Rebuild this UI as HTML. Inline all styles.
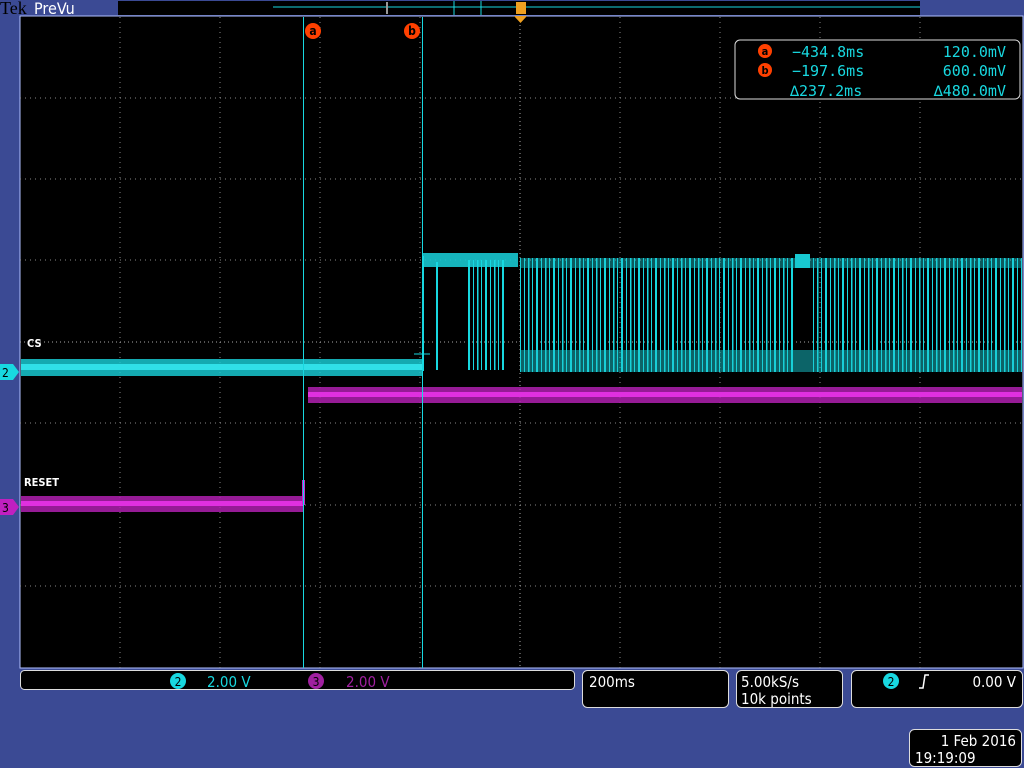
<!DOCTYPE html>
<html><head><style>
html,body{margin:0;padding:0;width:1024px;height:768px;overflow:hidden;background:#3b4a94;font-family:"DejaVu Sans Condensed","Liberation Sans",sans-serif}
svg{position:absolute;left:0;top:0}
.t{font-family:"DejaVu Sans Mono","Liberation Mono",monospace}
</style></head><body>
<svg width="1024" height="768" viewBox="0 0 1024 768">
<defs>
<pattern id="burst" width="17" height="120" patternUnits="userSpaceOnUse">
<rect x="1" y="0" width="1.5" height="120" fill="#18d8e0"/>
<rect x="5" y="0" width="1" height="120" fill="#18d8e0"/>
<rect x="9" y="0" width="2" height="120" fill="#18d8e0"/>
<rect x="14" y="0" width="1" height="120" fill="#18d8e0"/>
</pattern>
</defs>
<text x="0" y="14" font-family="Liberation Serif,serif" font-size="18" fill="#000">Tek</text>
<text x="34" y="14" font-size="16" fill="#fff">PreVu</text>
<rect x="118" y="1" width="802" height="14" fill="#000"/>
<line x1="273" y1="7" x2="920" y2="7" stroke="#18d8e0"/>
<rect x="386" y="2" width="2" height="12" fill="#999"/>
<line x1="454" y1="1" x2="454" y2="15" stroke="#18d8e0"/>
<line x1="481" y1="1" x2="481" y2="15" stroke="#18d8e0"/>
<rect x="516" y="2" width="10" height="12" fill="#f0a020"/>
<rect x="20" y="16" width="1003" height="652" fill="#000" stroke="#b0c0ff" stroke-width="1"/>
<g stroke="#888" stroke-width="1" stroke-dasharray="1,4">
<line x1="120" y1="17" x2="120" y2="668"/><line x1="220" y1="17" x2="220" y2="668"/><line x1="320" y1="17" x2="320" y2="668"/><line x1="420" y1="17" x2="420" y2="668"/><line x1="620" y1="17" x2="620" y2="668"/><line x1="720" y1="17" x2="720" y2="668"/><line x1="820" y1="17" x2="820" y2="668"/><line x1="920" y1="17" x2="920" y2="668"/>
<line x1="20" y1="98" x2="1022" y2="98"/><line x1="20" y1="179" x2="1022" y2="179"/><line x1="20" y1="260" x2="1022" y2="260"/><line x1="20" y1="423" x2="1022" y2="423"/><line x1="20" y1="505" x2="1022" y2="505"/><line x1="20" y1="586" x2="1022" y2="586"/>
</g>
<g stroke="#aaa" stroke-dasharray="1,3"><line x1="520" y1="17" x2="520" y2="668"/><line x1="20" y1="342" x2="1022" y2="342"/></g>
<rect x="21" y="496" width="282" height="16" fill="#b020b0" opacity="0.85"/>
<rect x="21" y="501" width="282" height="5" fill="#e030e0"/>
<rect x="308" y="387" width="714" height="16" fill="#b020b0" opacity="0.85"/>
<rect x="308" y="392" width="714" height="5" fill="#e030e0"/>
<rect x="302" y="480" width="3" height="25" fill="#d020d0"/>
<rect x="21" y="359" width="401" height="17" fill="#18c8d0" opacity="0.85"/>
<rect x="21" y="364" width="401" height="6" fill="#30e0e8"/>
<rect x="422" y="253" width="96" height="14" fill="#18c8d0" opacity="0.9"/>
<rect x="422" y="256" width="2" height="115" fill="#18d8e0"/>
<rect x="436" y="262" width="2" height="108" fill="#18d8e0"/>
<rect x="465" y="260" width="40" height="110" fill="url(#burst)"/>
<rect x="520" y="258" width="275" height="114" fill="url(#burst)"/>
<rect x="795" y="254" width="15" height="14" fill="#18c8d0"/>
<rect x="810" y="258" width="212" height="114" fill="url(#burst)"/>
<rect x="520" y="350" width="502" height="22" fill="#18c8d0" opacity="0.5"/>
<rect x="520" y="258" width="502" height="10" fill="#18c8d0" opacity="0.45"/>
<line x1="414" y1="354" x2="430" y2="354" stroke="#18d8e0"/>
<line x1="303.5" y1="17" x2="303.5" y2="668" stroke="#18d8e0"/>
<line x1="422.5" y1="17" x2="422.5" y2="668" stroke="#18d8e0"/>
<circle cx="313" cy="31" r="8" fill="#ff4000"/><text x="313" y="35" font-size="12" fill="#000" text-anchor="middle" font-weight="bold">a</text>
<circle cx="412" cy="31" r="8" fill="#ff4000"/><text x="412" y="35" font-size="12" fill="#000" text-anchor="middle" font-weight="bold">b</text>
<path d="M514 16 L527 16 L520.5 23 Z" fill="#f0a020"/>
<text x="27" y="347" font-size="11" font-weight="bold" fill="#fff">CS</text>
<text x="24" y="486" font-size="11" font-weight="bold" fill="#fff">RESET</text>
<path d="M0 364 L13 364 L19 372 L13 380 L0 380 Z" fill="#18d8e0"/><text x="2" y="377" font-size="12" fill="#000">2</text>
<path d="M0 499 L13 499 L19 507 L13 515 L0 515 Z" fill="#c020c0"/><text x="2" y="512" font-size="12" fill="#000">3</text>
<rect x="735" y="40" width="285" height="59" rx="5" fill="#000" stroke="#ddd"/>
<circle cx="765" cy="51" r="7" fill="#ff4000"/><text x="765" y="55" font-size="11" font-weight="bold" fill="#000" text-anchor="middle">a</text>
<circle cx="765" cy="70" r="7" fill="#ff4000"/><text x="765" y="74" font-size="11" font-weight="bold" fill="#000" text-anchor="middle">b</text>
<g class="t" font-size="15" fill="#18d8e0">
<text x="792" y="57">−434.8ms</text><text x="1006" y="57" text-anchor="end">120.0mV</text>
<text x="792" y="76">−197.6ms</text><text x="1006" y="76" text-anchor="end">600.0mV</text>
<text x="790" y="96">∆237.2ms</text><text x="1006" y="96" text-anchor="end">∆480.0mV</text>
</g>
<rect x="20.5" y="670.5" width="554" height="19" rx="4" fill="#000" stroke="#ddd"/>
<circle cx="178" cy="681" r="8" fill="#18d8e0"/><text x="178" y="686" font-size="12" fill="#000" text-anchor="middle">2</text>
<text x="207" y="687" font-size="15" fill="#18d8e0">2.00 V</text>
<circle cx="316" cy="681" r="8" fill="#a020a0"/><text x="316" y="686" font-size="12" fill="#000" text-anchor="middle">3</text>
<text x="346" y="687" font-size="15" fill="#a020a0">2.00 V</text>
<rect x="582.5" y="670.5" width="146" height="37" rx="5" fill="#000" stroke="#ddd"/>
<text x="589" y="687" font-size="15" fill="#fff">200ms</text>
<rect x="736.5" y="670.5" width="106" height="37" rx="5" fill="#000" stroke="#ddd"/>
<text x="741" y="687" font-size="15" fill="#fff">5.00kS/s</text>
<text x="741" y="704" font-size="15" fill="#fff">10k points</text>
<rect x="851.5" y="670.5" width="171" height="37" rx="5" fill="#000" stroke="#ddd"/>
<circle cx="891" cy="681" r="8" fill="#18d8e0"/><text x="891" y="686" font-size="12" fill="#000" text-anchor="middle">2</text>
<path d="M919 688 L923 688 L925 675 L929 675" stroke="#fff" stroke-width="1.5" fill="none"/>
<text x="1016" y="687" font-size="15" fill="#fff" text-anchor="end">0.00 V</text>
<rect x="909.5" y="729.5" width="112" height="37" rx="5" fill="#000" stroke="#ddd"/>
<text x="1016" y="746" font-size="15" fill="#fff" text-anchor="end">1 Feb  2016</text>
<text x="915" y="763" font-size="15" fill="#fff">19:19:09</text>
</svg>
</body></html>
